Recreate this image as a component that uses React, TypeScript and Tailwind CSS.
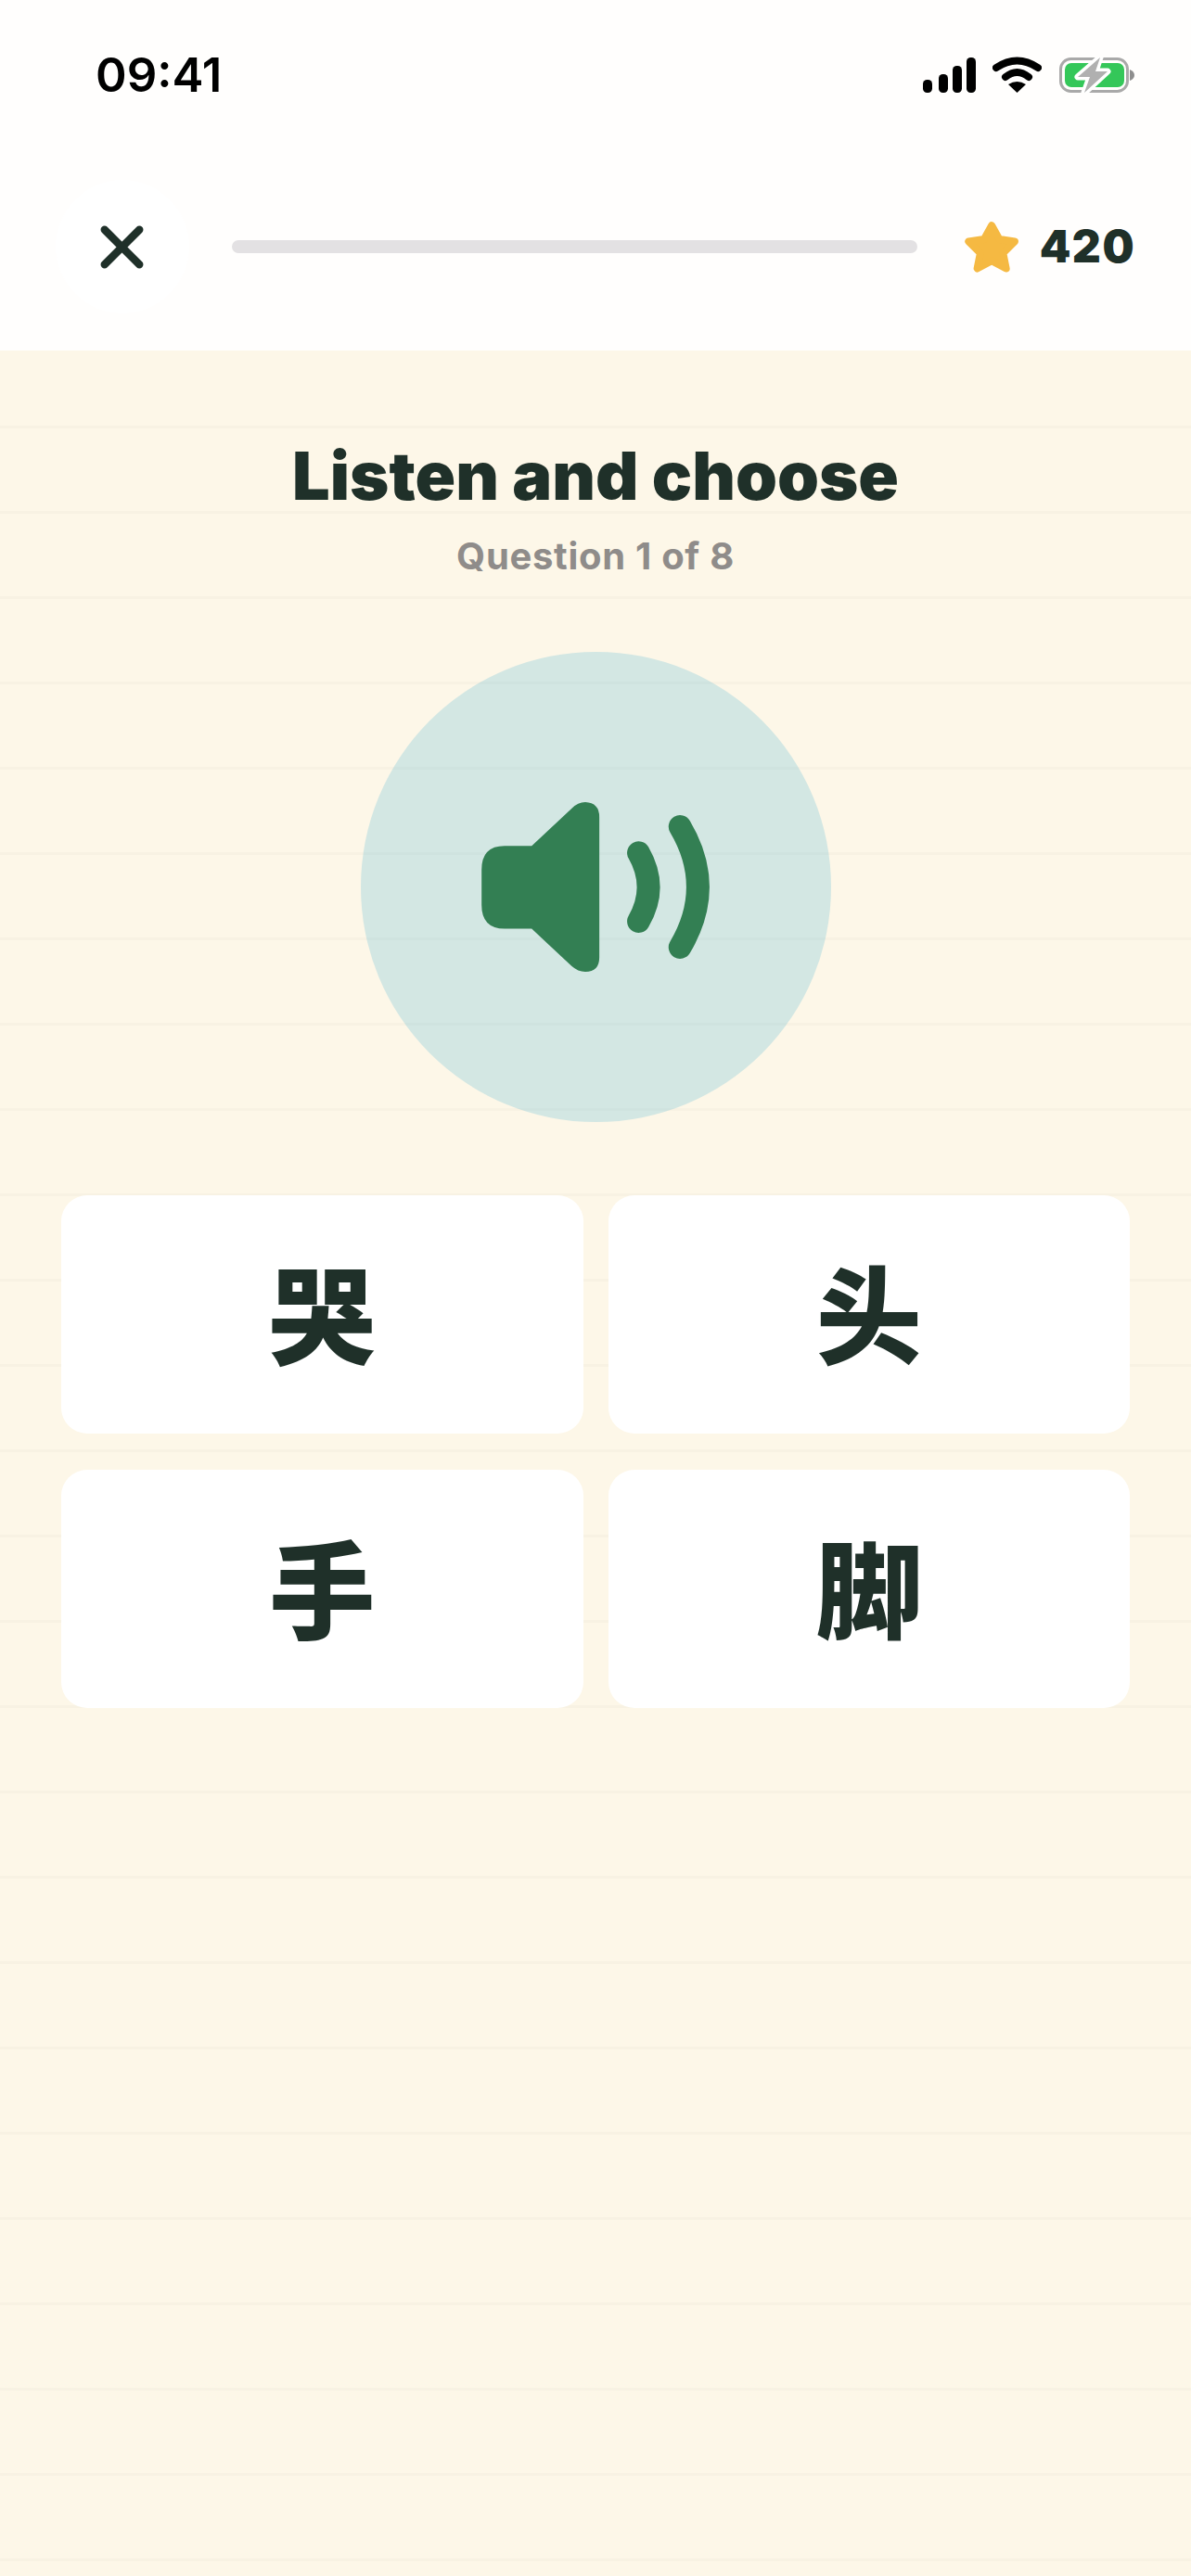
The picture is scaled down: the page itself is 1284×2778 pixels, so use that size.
import { X } from 'lucide-react'

const options = ['哭', '头', '手', '脚']

function StatusIcons() {
  return (
    <div className="flex items-end gap-[18px]">
      <svg width="57" height="38" viewBox="0 0 57 38" fill="#000">
        <rect x="0" y="24" width="10" height="14" rx="4.5" />
        <rect x="17" y="18" width="10" height="20" rx="4.5" />
        <rect x="32" y="9" width="10" height="29" rx="4.5" />
        <rect x="47" y="0" width="10" height="38" rx="4.5" />
      </svg>
      <svg width="53" height="39" viewBox="0 0 53 39" fill="none" stroke="#000" strokeWidth="8" strokeLinecap="round">
        <path d="M4 12 Q26.5 -3 49 12" />
        <path d="M14 22 Q26.5 12 39 22" />
        <path d="M26.5 39 L17 30 Q26.5 24 36 30 Z" fill="#000" stroke="none" />
      </svg>
      <svg className="ml-px" width="81" height="38" viewBox="0 0 81 38">
        <rect x="1.5" y="1.5" width="72" height="35" rx="11" fill="none" stroke="#a9a9a9" strokeWidth="3" />
        <rect x="6" y="6" width="64" height="26" rx="7" fill="#34c759" />
        <path d="M76 13 Q81 15 81 19 Q81 23 76 25 Z" fill="#8e8e8e" />
        <path d="M44 0 L20 21 H33 L27 38 L52 15 H39 Z" fill="#b0b0b0" stroke="#fff" strokeWidth="7" paintOrder="stroke" strokeLinejoin="round" />
      </svg>
    </div>
  )
}

function SpeakerIcon() {
  return (
    <svg width="246" height="183" viewBox="433 538 714 532" fill="none">
      <path
        d="M505 675 H590 L715 558 Q735 538 758 538 Q802 540 802 585 V1025 Q802 1070 758 1070 Q735 1070 715 1052 L590 935 H505 Q433 935 433 860 V750 Q433 675 505 675 Z"
        fill="#337f53"
      />
      <path d="M925 697 Q987 805 925 912" stroke="#337f53" strokeWidth="72" strokeLinecap="round" />
      <path d="M1055 615 Q1167 804 1055 993" stroke="#337f53" strokeWidth="72" strokeLinecap="round" />
    </svg>
  )
}

export default function App() {
  return (
    <div className="flex min-h-[2778px] flex-col font-['Inter','Noto_Sans_CJK_SC',sans-serif] text-[#1f3029]">
      {/* Header */}
      <div className="h-[378px] bg-[#fffefd]">
        <div className="flex h-[160px] items-center justify-between pl-[103px] pr-[61px]">
          <span className="mt-[3px] text-[51px] font-semibold text-black">09:41</span>
          <StatusIcons />
        </div>
        <div className="flex h-[212px] items-center pl-[60px] pr-[60px]">
          <button className="flex h-[144px] w-[144px] items-center justify-center rounded-full bg-white">
            <X size={75} strokeWidth={2.7} />
          </button>
          <div className="ml-[46px] h-[14px] w-[740px] rounded-full bg-[#e3e1e3]" />
          <svg className="ml-[51px]" width="58" height="56" viewBox="30 40 175 168" fill="#f5b942" stroke="#f5b942" strokeWidth="24" strokeLinejoin="round">
            <polygon points="118,55 143,100 193,107 155,145 165,195 118,170 71,195 81,145 43,107 93,100" />
          </svg>
          <span className="ml-[23px] text-[48px] font-black tracking-[1.5px]">420</span>
        </div>
      </div>

      {/* Question */}
      <div className="flex flex-1 flex-col items-center bg-[#fdf7e8] bg-[repeating-linear-gradient(to_bottom,transparent_0,transparent_81px,#f8f2e3_81px,#f8f2e3_84px,transparent_84px,transparent_92px)]">
        <h1 className="mt-[95px] text-[72px] leading-[80px] font-black">Listen and choose</h1>
        <p className="mt-[23px] text-[40px] leading-[48px] font-bold tracking-[0.7px] text-[#8f8c8a]">Question 1 of 8</p>
        <button className="mt-[79px] flex h-[507px] w-[507px] items-center justify-center rounded-full bg-[#2babd4]/20">
          <SpeakerIcon />
        </button>
        <div className="mt-[79px] grid grid-cols-2 gap-x-[27px] gap-y-[39px] self-stretch px-[66px]">
          {options.map((o) => (
            <button key={o} className="flex h-[257px] items-center justify-center rounded-[28px] bg-white pt-[6px] text-[114px] font-black">
              {o}
            </button>
          ))}
        </div>
      </div>
    </div>
  )
}
